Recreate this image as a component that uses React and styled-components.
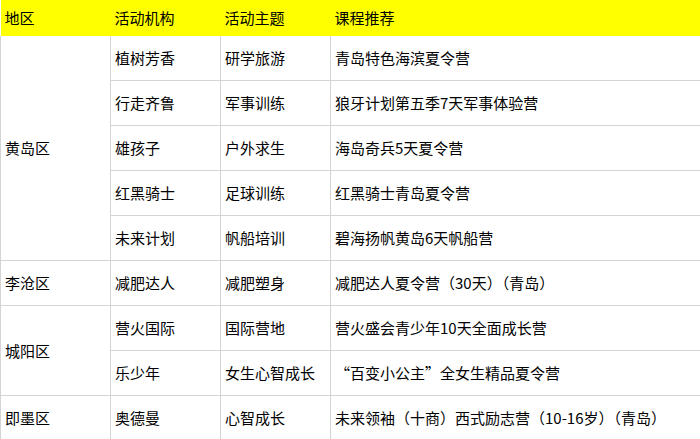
import React from "react"
import styled, { createGlobalStyle } from "styled-components"

const GlobalStyle = createGlobalStyle`
  html, body {
    margin: 0;
    padding: 0;
    background: #ffffff;
  }
  body {
    font-family: "Noto Sans CJK SC", "Noto Sans", sans-serif;
    color: #000000;
    overflow: hidden;
  }
`

const Table = styled.table`
  width: 100%;
  border-collapse: collapse;
  table-layout: fixed;
  font-size: 15px;
  line-height: 20px;
`

const Col = styled.col`
  width: ${({ w }) => (w ? `${w}px` : "auto")};
`

const HeadCell = styled.th`
  height: 36px;
  padding: 0 4px;
  background: #ffff00;
  font-weight: normal;
  text-align: left;
  vertical-align: middle;
  border: none;
`

const Cell = styled.td`
  height: 44px;
  padding: 0 4px;
  text-align: left;
  vertical-align: middle;
  border: 1px solid #d4d4d4;
  border-top: ${({ first }) => (first ? "none" : "1px solid #d4d4d4")};
  white-space: nowrap;
  overflow: hidden;

  &:last-child {
    border-right: none;
  }
`

const rows = [
  { area: "黄岛区", span: 5, org: "植树芳香", theme: "研学旅游", course: "青岛特色海滨夏令营" },
  { org: "行走齐鲁", theme: "军事训练", course: "狼牙计划第五季7天军事体验营" },
  { org: "雄孩子", theme: "户外求生", course: "海岛奇兵5天夏令营" },
  { org: "红黑骑士", theme: "足球训练", course: "红黑骑士青岛夏令营" },
  { org: "未来计划", theme: "帆船培训", course: "碧海扬帆黄岛6天帆船营" },
  { area: "李沧区", span: 1, org: "减肥达人", theme: "减肥塑身", course: "减肥达人夏令营（30天）（青岛）" },
  { area: "城阳区", span: 2, org: "营火国际", theme: "国际营地", course: "营火盛会青少年10天全面成长营" },
  { org: "乐少年", theme: "女生心智成长", course: "“百变小公主”全女生精品夏令营" },
  { area: "即墨区", span: 1, org: "奥德曼", theme: "心智成长", course: "未来领袖（十商）西式励志营（10-16岁）（青岛）" },
]

export default function App() {
  return (
    <>
      <GlobalStyle />
      <Table>
        <colgroup>
          <Col w={110} />
          <Col w={110} />
          <Col w={110} />
          <Col />
        </colgroup>
        <thead>
          <tr>
            <HeadCell>地区</HeadCell>
            <HeadCell>活动机构</HeadCell>
            <HeadCell>活动主题</HeadCell>
            <HeadCell>课程推荐</HeadCell>
          </tr>
        </thead>
        <tbody>
          {rows.map((r, i) => (
            <tr key={i}>
              {r.area && (
                <Cell rowSpan={r.span} first={i === 0}>
                  {r.area}
                </Cell>
              )}
              <Cell first={i === 0}>{r.org}</Cell>
              <Cell first={i === 0}>{r.theme}</Cell>
              <Cell first={i === 0}>{r.course}</Cell>
            </tr>
          ))}
        </tbody>
      </Table>
    </>
  )
}
